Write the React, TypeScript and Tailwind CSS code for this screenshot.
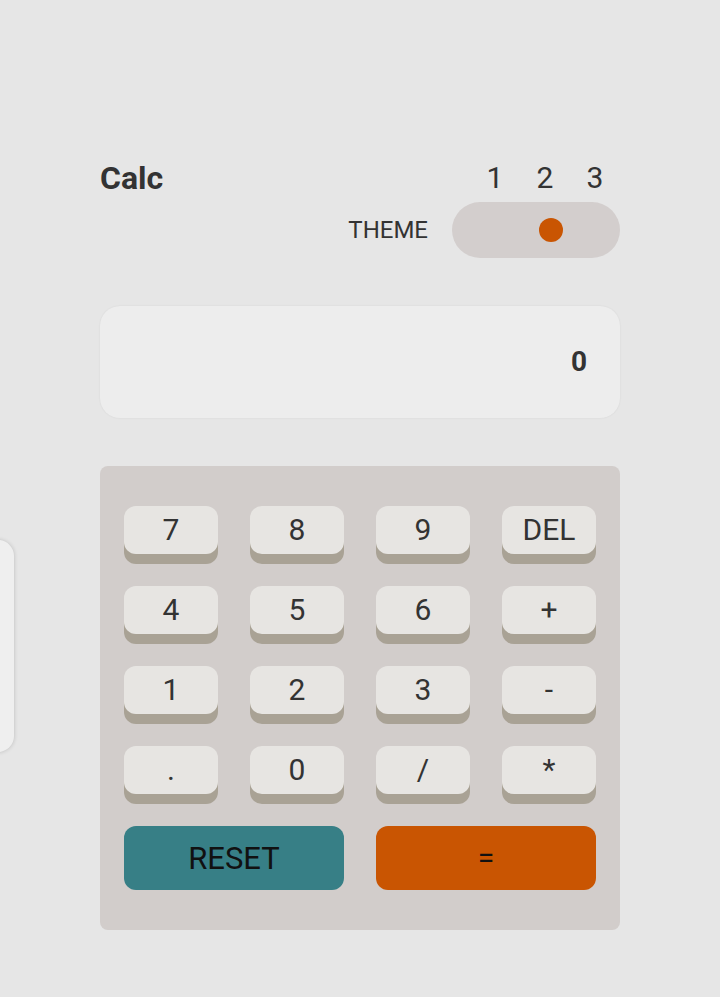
const keys = ['7', '8', '9', 'DEL', '4', '5', '6', '+', '1', '2', '3', '-', '.', '0', '/', '*']

function Key({ label }: { label: string }) {
  return (
    <button className="h-[48px] rounded-[12px] bg-[#e7e5e2] text-[30px] leading-none text-[#333] shadow-[0_10px_0_#a9a295]">
      {label}
    </button>
  )
}

export default function App() {
  return (
    <div className="relative min-h-[997px] overflow-hidden bg-[#e6e6e6] font-['Roboto',sans-serif] text-[#333]">
      {/* card peeking in from the left edge */}
      <div className="absolute left-[-200px] top-[540px] h-[212px] w-[214px] rounded-[16px] bg-[#efefef] shadow-[0_0_4px_rgba(0,0,0,0.18)]" />

      <div className="ml-[100px] w-[520px] pt-[160px]">
        <header className="flex items-start justify-between">
          <h1 className="text-[32px] font-bold leading-[36px] text-[#333]">Calc</h1>
          <div className="flex flex-col items-end">
            <div className="grid w-[150px] grid-cols-3 text-center text-[30px] leading-[36px]">
              <span>1</span>
              <span>2</span>
              <span>3</span>
            </div>
            <div className="mt-[6px] flex items-center gap-[24px]">
              <span className="text-[24px]">THEME</span>
              <div className="flex h-[56px] w-[168px] items-center rounded-full bg-[#d3cecd] pl-[87px]">
                <span className="h-[24px] w-[24px] rounded-full bg-[#c95502]" />
              </div>
            </div>
          </div>
        </header>

        <div className="mt-[48px] flex h-[112px] items-center justify-end rounded-[20px] bg-[#ededed] pr-[33px] text-[28px] font-bold shadow-[0_0_2px_rgba(0,0,0,0.08)]">
          0
        </div>

        <div className="mt-[48px] rounded-[8px] bg-[#d2cdcb] px-[24px] py-[40px]">
          <div className="grid grid-cols-4 gap-x-[32px] gap-y-[32px]">
            {keys.map((k) => (
              <Key key={k} label={k} />
            ))}
            <button className="col-span-2 h-[64px] rounded-[12px] bg-[#377f86] text-[31px] leading-none text-[#111]">
              RESET
            </button>
            <button className="col-span-2 h-[64px] rounded-[12px] bg-[#c95502] text-[30px] leading-none text-[#111]">
              =
            </button>
          </div>
        </div>
      </div>
    </div>
  )
}
